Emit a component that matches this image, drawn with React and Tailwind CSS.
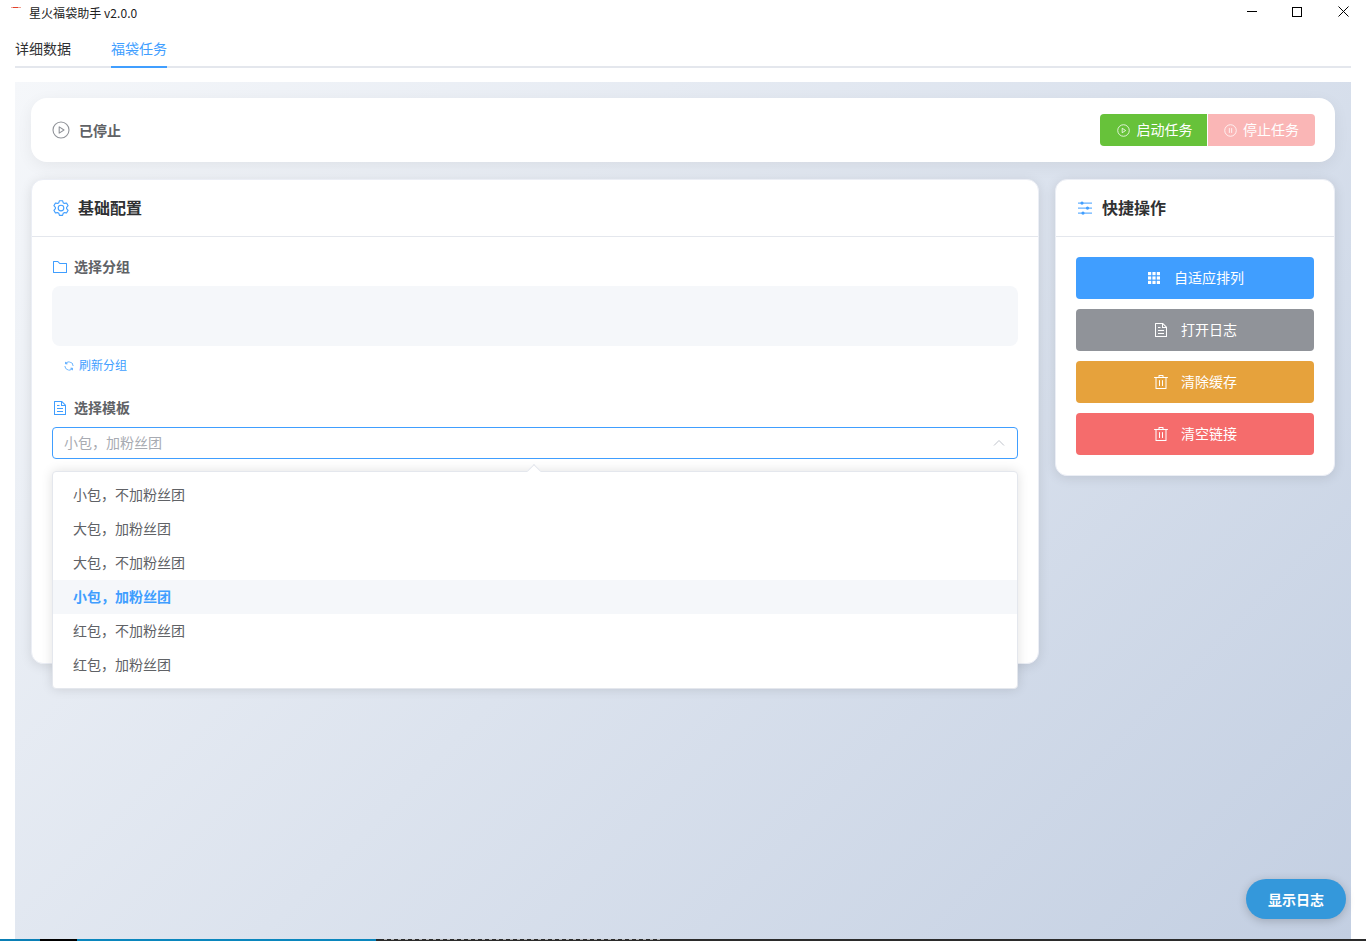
const Icon = ({ d, className }) => (
    <svg viewBox="0 0 1024 1024" fill="currentColor" className={className}>
        <path d={d} />
    </svg>
);

// nudges CJK text up a pixel, the installed font sits lower than the reference one
const T = ({ children }) => <span className="pb-[2px]">{children}</span>;

const Play = ({ className }) => (
    <svg viewBox="0 0 18 18" fill="none" stroke="currentColor" className={className}>
        <circle cx="9" cy="9" r="8" strokeWidth="1.1" />
        <path d="M7.2 5.9 12 9l-4.8 3.1z" strokeWidth="1.1" strokeLinejoin="round" />
    </svg>
);

const Pause = ({ className }) => (
    <svg viewBox="0 0 18 18" fill="none" stroke="currentColor" className={className}>
        <circle cx="9" cy="9" r="8" strokeWidth="1.1" />
        <path d="M7.4 6.2v5.6M10.6 6.2v5.6" strokeWidth="1.1" strokeLinecap="round" />
    </svg>
);

const FOLDER = 'M128 192v640h768V320H485.76L357.504 192zm-32-64h287.872l128.384 128H928a32 32 0 0 1 32 32v576a32 32 0 0 1-32 32H96a32 32 0 0 1-32-32V160a32 32 0 0 1 32-32';
const DOC = 'M832 384H576V128H192v768h640zm-26.496-64L640 154.496V320zM160 64h480l256 256v608a32 32 0 0 1-32 32H160a32 32 0 0 1-32-32V96a32 32 0 0 1 32-32m160 448h384v64H320zm0-192h160v64H320zm0 384h384v64H320z';
const TRASH = 'M160 256H96a32 32 0 0 1 0-64h256V95.936a32 32 0 0 1 32-32h256a32 32 0 0 1 32 32V192h256a32 32 0 1 1 0 64h-64v672a32 32 0 0 1-32 32H192a32 32 0 0 1-32-32zm448-64v-64H416v64zM224 896h576V256H224zm192-128a32 32 0 0 1-32-32V416a32 32 0 0 1 64 0v320a32 32 0 0 1-32 32m192 0a32 32 0 0 1-32-32V416a32 32 0 0 1 64 0v320a32 32 0 0 1-32 32';
const REFRESH = 'M771.776 794.88A384 384 0 0 1 128 512h64a320 320 0 0 0 555.712 216.448H654.72a32 32 0 1 1 0-64h149.056a32 32 0 0 1 32 32v148.928a32 32 0 1 1-64 0v-50.56zM276.288 295.616h92.992a32 32 0 0 1 0 64H220.16a32 32 0 0 1-32-32V178.56a32 32 0 0 1 64 0v50.56A384 384 0 0 1 896.128 512h-64a320 320 0 0 0-555.776-216.384z';
const SETTING = 'M600.704 64a32 32 0 0 1 30.464 22.208l35.2 109.376c14.784 7.232 28.928 15.36 42.432 24.512l112.384-24.192a32 32 0 0 1 34.432 15.36L944.32 364.8a32 32 0 0 1-4.032 37.504l-77.12 85.12a357 357 0 0 1 0 49.024l77.12 85.248a32 32 0 0 1 4.032 37.504l-88.704 153.6a32 32 0 0 1-34.432 15.296L708.8 803.904c-13.44 9.088-27.648 17.28-42.368 24.512l-35.264 109.376A32 32 0 0 1 600.704 960H423.296a32 32 0 0 1-30.464-22.208L357.696 828.48a352 352 0 0 1-42.56-24.64l-112.32 24.256a32 32 0 0 1-34.432-15.36L79.68 659.2a32 32 0 0 1 4.032-37.504l77.12-85.248a357 357 0 0 1 0-48.896l-77.12-85.248A32 32 0 0 1 79.68 364.8l88.704-153.6a32 32 0 0 1 34.432-15.296l112.32 24.256c13.568-9.152 27.776-17.408 42.56-24.64l35.2-109.312A32 32 0 0 1 423.232 64H600.64zm-23.424 64H446.72l-36.352 113.088-24.512 11.968a294 294 0 0 0-34.816 20.096l-22.656 15.36-116.224-25.088-65.28 113.152 79.68 88.192-1.92 27.136a293 293 0 0 0 0 40.192l1.92 27.136-79.808 88.192 65.344 113.152 116.224-25.024 22.656 15.296a294 294 0 0 0 34.816 20.096l24.512 11.968L446.72 896h130.688l36.48-113.152 24.448-11.904a288 288 0 0 0 34.752-20.096l22.592-15.296 116.288 25.024 65.28-113.152-79.744-88.192 1.92-27.136a293 293 0 0 0 0-40.256l-1.92-27.136 79.808-88.128-65.344-113.152-116.288 24.96-22.592-15.232a288 288 0 0 0-34.752-20.096l-24.448-11.904L577.344 128zM512 320a192 192 0 1 1 0 384 192 192 0 0 1 0-384m0 64a128 128 0 1 0 0 256 128 128 0 0 0 0-256';

const Sliders = ({ className }) => (
    <svg viewBox="0 0 16 16" className={className} fill="currentColor">
        <rect x="1" y="2.6" width="14" height="1" />
        <rect x="1" y="7.6" width="14" height="1" />
        <rect x="1" y="12.6" width="14" height="1" />
        <circle cx="5" cy="3.1" r="1.6" />
        <circle cx="10.5" cy="8.1" r="1.6" />
        <circle cx="6" cy="13.1" r="1.6" />
    </svg>
);

const Grid = ({ className }) => (
    <svg viewBox="0 0 12 12" className={className} fill="currentColor">
        {[0, 4.4, 8.8].map((y) =>
            [0, 4.4, 8.8].map((x) => (
                <rect key={`${x}-${y}`} x={x} y={y} width="3.2" height="3.2" />
            ))
        )}
    </svg>
);

// \uFF0C is the full-width comma
const templates = [
    '小包\uFF0C不加粉丝团',
    '大包\uFF0C加粉丝团',
    '大包\uFF0C不加粉丝团',
    '小包\uFF0C加粉丝团',
    '红包\uFF0C不加粉丝团',
    '红包\uFF0C加粉丝团',
];

const actions = [
    { label: '自适应排列', bg: 'bg-[#409eff] pl-[2px]', icon: <Grid className="size-[12px]" />, gap: 'gap-[14px]' },
    { label: '打开日志', bg: 'bg-[#909399]', icon: <Icon d={DOC} className="size-[16px]" />, gap: 'gap-[12px]' },
    { label: '清除缓存', bg: 'bg-[#e6a23c]', icon: <Icon d={TRASH} className="size-[16px]" />, gap: 'gap-[12px]' },
    { label: '清空链接', bg: 'bg-[#f56c6c]', icon: <Icon d={TRASH} className="size-[16px]" />, gap: 'gap-[12px]' },
];

function TitleBar() {
    return (
        <div className="flex h-[26px] items-start justify-between">
            <div className="flex items-center pl-[11px] pt-[4px]">
                <svg viewBox="0 0 10 10" className="mb-[8px] size-[10px]">
                    <rect x="0" y="2" width="10" height="1" fill="#f0a090" />
                    <rect x="2" y="2" width="5" height="1" fill="#e2402c" />
                </svg>
                <span className="ml-[8px] pb-[1px] text-[12px] leading-[18px] tracking-[0.05px] text-[#222]">星火福袋助手 v2.0.0</span>
            </div>
            <div className="flex items-center pt-[6px] pr-[17px] text-black">
                <div className="h-[1px] w-[10px] bg-black" />
                <div className="ml-[35px] size-[10px] border border-black" />
                <svg viewBox="0 0 11 11" className="ml-[36px] size-[11px]" stroke="currentColor" strokeWidth="1" fill="none">
                    <path d="M0.5 0.5 10.5 10.5M10.5 0.5 0.5 10.5" />
                </svg>
            </div>
        </div>
    );
}

function Tabs() {
    return (
        <div className="mx-[15px] flex h-[42px] gap-[40px] border-b-2 border-[#e4e7ed] text-[14px]">
            <div className="flex h-[42px] items-center pt-[2px] text-[#303133]">详细数据</div>
            <div className="flex h-[42px] items-center border-b-2 border-[#409eff] pt-[4px] text-[#409eff]">福袋任务</div>
        </div>
    );
}

function StatusCard() {
    return (
        <div className="flex h-[64px] items-center justify-between rounded-[16px] bg-white pr-[20px] pl-[21px] shadow-[0_4px_16px_rgba(0,0,0,0.06)]">
            <div className="flex items-center gap-[9px] text-[14px] font-bold text-[#606266]">
                <Play className="size-[18px] text-[#909399]" />
                已停止
            </div>
            <div className="flex gap-px">
                <button className="flex h-[32px] w-[107px] items-center justify-center gap-[7px] rounded-l-[4px] bg-[#67c23a] pl-[2px] text-[14px] text-white">
                    <Play className="size-[13px]" />
                    <T>启动任务</T>
                </button>
                <button className="flex h-[32px] w-[107px] items-center justify-center gap-[6px] rounded-r-[4px] bg-[#fab6b6] text-[14px] text-white">
                    <Pause className="size-[13px]" />
                    <T>停止任务</T>
                </button>
            </div>
        </div>
    );
}

function ConfigCard() {
    return (
        <div className="relative h-[485px] w-[1008px] shrink-0 rounded-[12px] border border-[#ebeef5] bg-white shadow-[0_2px_12px_rgba(0,0,0,0.1)]">
            <div className="flex h-[57px] items-center gap-[8px] border-b border-[#e4e7ed] pl-[20px] text-[16px] font-semibold text-[#303133]">
                <Icon d={SETTING} className="size-[18px] text-[#409eff]" />
                <T>基础配置</T>
            </div>
            <div className="px-[20px] pt-[20px]">
                <div className="flex h-[20px] items-center gap-[6px] text-[14px] font-semibold text-[#606266]">
                    <Icon d={FOLDER} className="size-[16px] text-[#409eff]" />
                    <T>选择分组</T>
                </div>
                <div className="mt-[9px] h-[60px] rounded-[8px] bg-[#f5f7fa]" />
                <div className="mt-[10px] flex h-[20px] items-center gap-[4px] pl-[11px] text-[12px] text-[#409eff]">
                    <Icon d={REFRESH} className="size-[12px]" />
                    <T>刷新分组</T>
                </div>
                <div className="mt-[22px] flex h-[20px] items-center gap-[6px] text-[14px] font-semibold text-[#606266]">
                    <Icon d={DOC} className="size-[16px] text-[#409eff]" />
                    <T>选择模板</T>
                </div>
                <div className="mt-[9px] flex h-[32px] items-center justify-between rounded-[4px] border border-[#409eff] pr-[12px] pl-[11px] text-[14px] text-[#a8abb2]">
                    <T>{templates[3]}</T>
                    <svg viewBox="0 0 12 12" className="size-[12px]" fill="none" stroke="#c0c4cc" strokeWidth="1">
                        <path d="M1 8.5 6 3.5l5 5" />
                    </svg>
                </div>
            </div>
            <div className="absolute top-[291px] left-[20px] z-10 w-[966px] rounded-[4px] border border-[#e4e7ed] bg-white py-[6px] text-[14px] shadow-[0_0_12px_rgba(0,0,0,0.12)]">
                <div className="absolute -top-[6px] left-[476px] size-[10px] rotate-45 border-t border-l border-[#e4e7ed] bg-white" />
                {templates.map((t, i) => (
                    <div
                        key={t}
                        className={
                            i === 3
                                ? 'relative flex h-[34px] items-center bg-[#f5f7fa] px-[20px] font-bold text-[#409eff]'
                                : 'relative flex h-[34px] items-center px-[20px] text-[#606266]'
                        }
                    >
                        <T>{t}</T>
                    </div>
                ))}
            </div>
        </div>
    );
}

function QuickCard() {
    return (
        <div className="h-[297px] w-[280px] shrink-0 rounded-[12px] border border-[#ebeef5] bg-white shadow-[0_2px_12px_rgba(0,0,0,0.1)]">
            <div className="flex h-[57px] items-center gap-[9px] border-b border-[#e4e7ed] pl-[21px] text-[16px] font-semibold text-[#303133]">
                <Sliders className="size-[16px] text-[#409eff]" />
                <T>快捷操作</T>
            </div>
            <div className="flex flex-col gap-[10px] p-[20px]">
                {actions.map((a) => (
                    <button
                        key={a.label}
                        className={`flex h-[42px] items-center justify-center rounded-[4px] text-[14px] text-white ${a.bg} ${a.gap}`}
                    >
                        {a.icon}
                        <T>{a.label}</T>
                    </button>
                ))}
            </div>
        </div>
    );
}

function TaskbarSliver() {
    return (
        <div className="flex h-[2px] bg-[#2b2b2b]">
            <div className="w-[40px] bg-[#0a7fb5]" />
            <div className="w-[37px] bg-black" />
            <div className="w-[299px] bg-[#0a86bd]" />
            <div className="ml-[8px] h-[1px] w-[280px] bg-[repeating-linear-gradient(90deg,#aaa_0_3px,#2b2b2b_3px_7px)]" />
        </div>
    );
}

export default function App() {
    return (
        <div className="relative flex h-[941px] w-[1366px] flex-col overflow-hidden bg-white font-['Noto_Sans_CJK_SC','Liberation_Sans',sans-serif]">
            <TitleBar />
            <Tabs />
            <div className="mx-[15px] mt-[14px] min-h-0 flex-1 bg-[linear-gradient(135deg,#f5f7fa_0%,#c3cfe2_100%)] px-[16px] pt-[16px]">
                <StatusCard />
                <div className="mt-[17px] flex gap-[16px]">
                    <ConfigCard />
                    <QuickCard />
                </div>
            </div>
            <TaskbarSliver />
            <button className="absolute top-[879px] left-[1246px] h-[40px] w-[100px] rounded-[20px] bg-[#3498db] text-[14px] font-bold text-white shadow-[0_2px_10px_rgba(0,0,0,0.2)]">
                显示日志
            </button>
        </div>
    );
}
